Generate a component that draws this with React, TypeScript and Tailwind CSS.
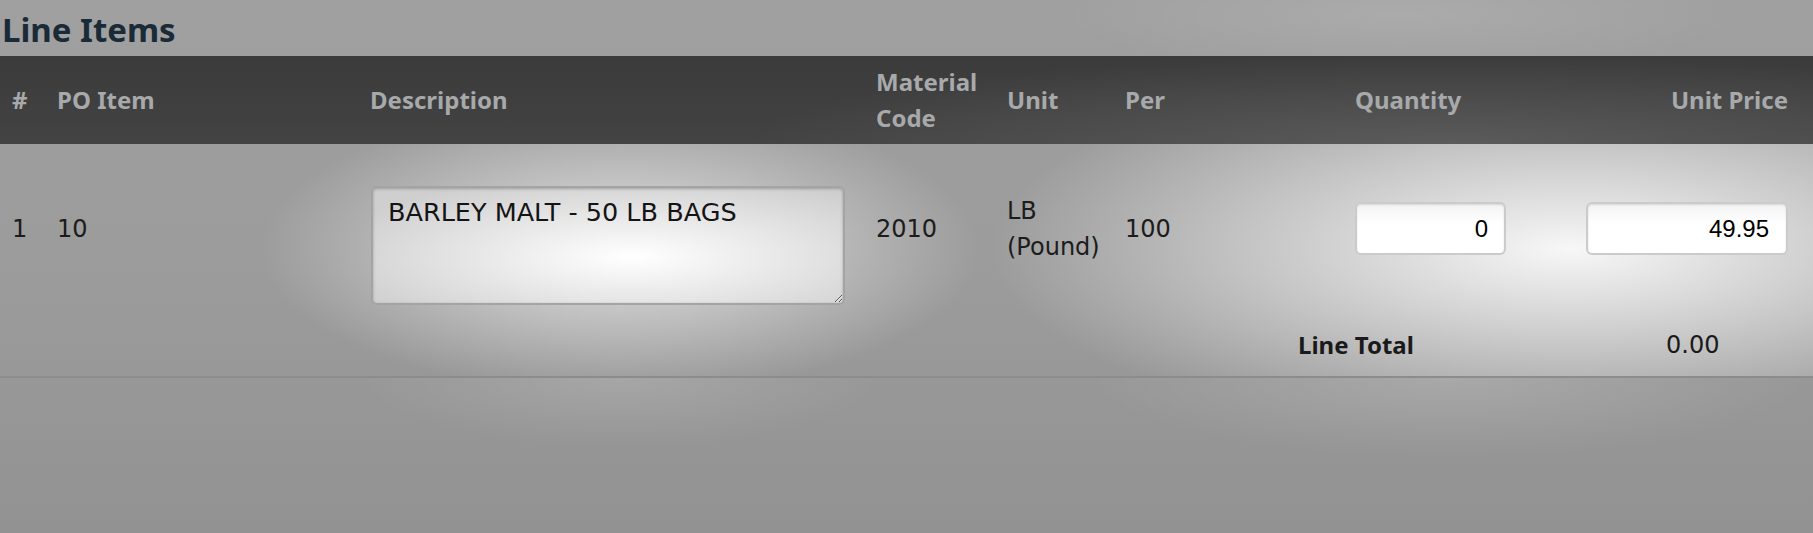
import React from "react"

const headFont = "[font-family:'Noto_Sans','Open_Sans',sans-serif]"

interface LineItem {
  index: number
  poItem: string
  description: string
  materialCode: string
  unit: string
  unitName: string
  per: string
  quantity: string
  unitPrice: string
  total: string
}

const items: LineItem[] = [
  {
    index: 1,
    poItem: "10",
    description: "BARLEY MALT - 50 LB BAGS",
    materialCode: "2010",
    unit: "LB",
    unitName: "(Pound)",
    per: "100",
    quantity: "0",
    unitPrice: "49.95",
    total: "0.00",
  },
]

function HeaderRow() {
  return (
    <div className="h-[88px] bg-[radial-gradient(ellipse_700px_90px_at_1450px_100%,rgba(110,110,110,0.55),rgba(110,110,110,0)),linear-gradient(#3b3b3b,#434343)]">
      <div
        className={`grid h-full grid-cols-[45px_313px_506px_131px_118px_230px_231px_202px_1fr] items-center pl-[12px] text-[24px] font-bold leading-[36px] text-[#a7a9ab] ${headFont}`}
      >
        <div>#</div>
        <div>PO Item</div>
        <div>Description</div>
        <div>
          Material
          <br />
          Code
        </div>
        <div>Unit</div>
        <div>Per</div>
        <div>Quantity</div>
        <div className="text-right">Unit Price</div>
        <div />
      </div>
    </div>
  )
}

function ItemRow({ item }: { item: LineItem }) {
  return (
    <div className="bg-[radial-gradient(ellipse_360px_145px_at_620px_105px,rgba(255,255,255,0.72),rgba(255,255,255,0)),radial-gradient(ellipse_580px_190px_at_1570px_105px,rgba(255,255,255,0.92),rgba(255,255,255,0))]">
      <div className="grid h-[178px] grid-cols-[45px_313px_506px_131px_118px_230px_231px_202px_1fr] items-start pl-[12px] text-[24px] leading-[36px] text-[#1c1c1c] [font-family:'DejaVu_Sans',sans-serif]">
        <div className="pt-[67px]">{item.index}</div>
        <div className="pt-[67px]">{item.poItem}</div>
        <div className="pt-[42px] pl-px">
          <textarea
            defaultValue={item.description}
            className="block h-[119px] w-[474px] rounded-[6px] border-2 border-[#a4a4a4] bg-[radial-gradient(ellipse_at_55%_60%,#ffffff,#f1f1f1_25%,#cfcfcf_85%)] pl-[15px] pt-[8px] text-[25.5px] leading-[32px] text-[#141414] shadow-[inset_0_1px_3px_rgba(0,0,0,0.25)] outline-none [font-family:'DejaVu_Sans',sans-serif]"
          />
        </div>
        <div className="pt-[67px]">{item.materialCode}</div>
        <div className="pt-[49px]">
          {item.unit}
          <br />
          {item.unitName}
        </div>
        <div className="pt-[67px]">{item.per}</div>
        <div className="pt-[58px]">
          <input
            defaultValue={item.quantity}
            className="block h-[53px] w-[151px] rounded-[6px] border-2 border-[#cbcbcb] bg-[linear-gradient(#f3f3f3,#ffffff_40%)] pr-[16px] text-right text-[24px] text-black shadow-[inset_0_1px_2px_rgba(0,0,0,0.12)] outline-none [font-family:'Liberation_Sans',Arial,sans-serif]"
          />
        </div>
        <div className="pt-[58px]">
          <input
            defaultValue={item.unitPrice}
            className="block h-[53px] w-[202px] rounded-[6px] border-2 border-[#cbcbcb] bg-[linear-gradient(#f3f3f3,#ffffff_40%)] pr-[17px] text-right text-[24px] text-black shadow-[inset_0_1px_2px_rgba(0,0,0,0.12)] outline-none [font-family:'Liberation_Sans',Arial,sans-serif]"
          />
        </div>
        <div />
      </div>
      <div className="grid h-[56px] grid-cols-[1298px_368px_1fr] border-b-2 border-[#8c8c8c] pt-[5px] leading-[36px] text-[#1a1a1a]">
        <div />
        <div className={`text-[24px] font-bold ${headFont}`}>Line Total</div>
        <div className="text-[24px] [font-family:'DejaVu_Sans',sans-serif]">{item.total}</div>
      </div>
    </div>
  )
}

export default function App() {
  return (
    <div className="flex h-[533px] w-full flex-col overflow-hidden bg-[radial-gradient(ellipse_340px_60px_at_1400px_15px,rgba(255,255,255,0.12),rgba(255,255,255,0)),linear-gradient(#a0a0a0,#9b9b9b_55%,#929292)]">
      <div className="h-[56px] shrink-0 pl-[2px] pt-[10px]">
        <h2 className={`text-[33px] font-bold leading-[40px] text-[#1b2a37] ${headFont}`}>
          Line Items
        </h2>
      </div>
      <HeaderRow />
      {items.map((item) => (
        <ItemRow key={item.index} item={item} />
      ))}
      <div className="flex-1 bg-[radial-gradient(ellipse_260px_70px_at_620px_0px,rgba(255,255,255,0.14),rgba(255,255,255,0)),radial-gradient(ellipse_360px_80px_at_1450px_0px,rgba(255,255,255,0.16),rgba(255,255,255,0))]" />
    </div>
  )
}
